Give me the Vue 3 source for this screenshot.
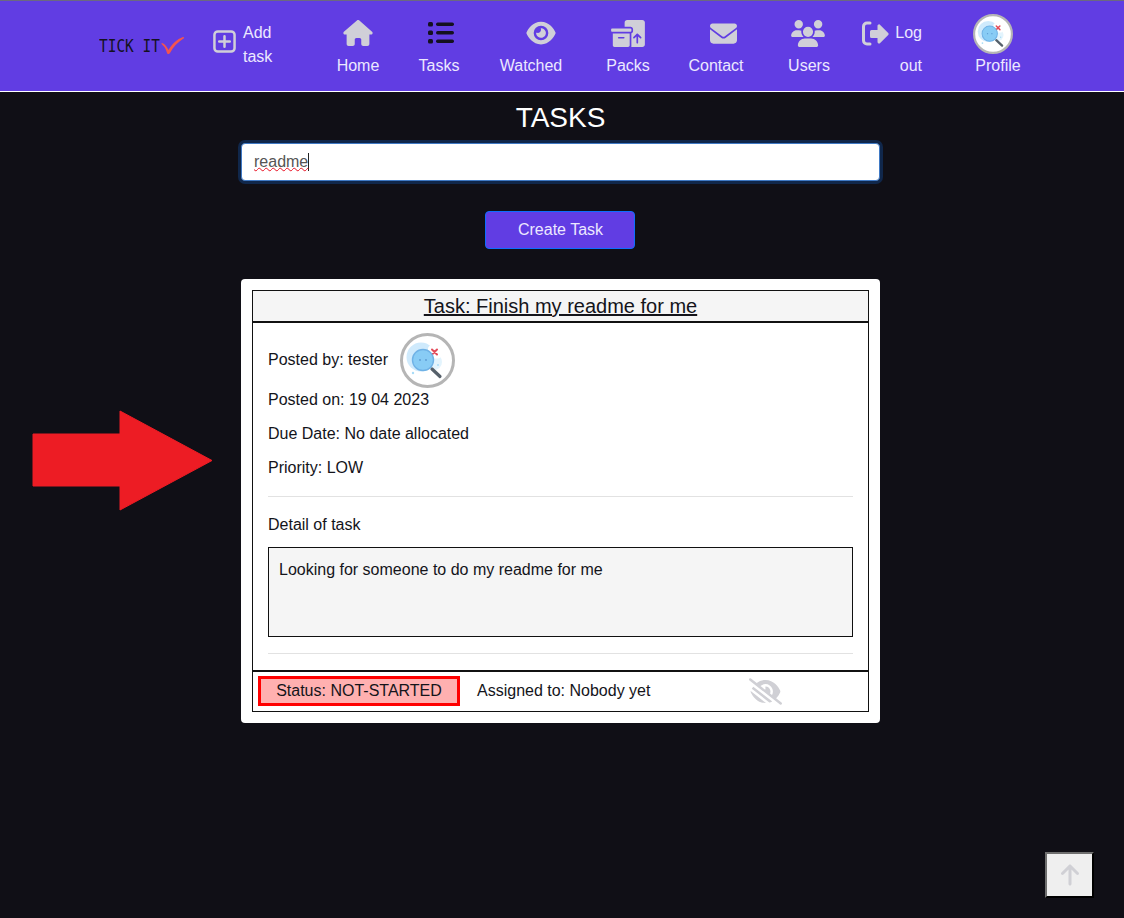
<template>
  <div class="page">
    <svg width="0" height="0" class="defs">
      <symbol id="avatar" viewBox="0 0 55 55">
        <circle cx="27.5" cy="27.5" r="26" fill="#fff" stroke="#b5b5b5" stroke-width="3" />
        <circle cx="21" cy="24" r="14.500" fill="#cfeafc" />
        <circle cx="34" cy="29" r="8" fill="#e3f4fd" />
        <circle cx="13" cy="40" r="1.200" fill="#a8dcf7" />
        <circle cx="38" cy="32" r="1" fill="#a8dcf7" />
        <rect x="28" y="12.500" width="13" height="13" rx="3.500" fill="#fff" />
        <path d="M32 16.500l5 5M37 16.500l-5 5" stroke="#e34b5a" stroke-width="2" stroke-linecap="round" />
        <path d="M32 36l8 7.500" stroke="#56606a" stroke-width="3.200" stroke-linecap="round" />
        <circle cx="23" cy="27" r="10.500" fill="#88ccf5" stroke="#6fb2e6" stroke-width="1.400" />
        <circle cx="20" cy="27" r=".9" fill="#5b9bd3" />
        <circle cx="26" cy="27" r=".9" fill="#5b9bd3" />
      </symbol>
    </svg>

    <nav class="navbar">
      <div class="brand">
        <span class="brand-text">TICK IT</span>
        <svg class="brand-check" viewBox="0 0 24 18">
          <path d="M1 7C4 8 6 11 7.500 14C11 8 16 3 22 1C23 .7 23.500 2 22.500 2.500C17 6 12 11 9 17C8 18.500 6.500 18.500 6 17C5 13 3 10 1 8.500C.3 8 .3 6.800 1 7Z" fill="#f4544f" />
        </svg>
      </div>

      <a class="add-task">
        <svg class="add-icon" viewBox="0 0 24 24">
          <rect x="1.500" y="1.500" width="21" height="21" rx="3.500" fill="none" stroke="#d0cfd8" stroke-width="2.600" />
          <path d="M12 6.500v11M6.500 12h11" stroke="#d0cfd8" stroke-width="2.600" stroke-linecap="round" />
        </svg>
        <span class="add-label">Add task</span>
      </a>

      <div class="links">
        <a class="link">
          <span class="link-icon">
            <svg width="30" height="26" viewBox="0 0 576 512"><path fill="#d0cfd8" d="M575.8 255.500c0 18-15 32.100-32 32.100h-32l.7 160.200c0 2.700-.2 5.400-.5 8.100V472c0 22.100-17.900 40-40 40H456c-1.100 0-2.200 0-3.300-.1c-1.400 .1-2.800 .1-4.200 .1H416 392c-22.100 0-40-17.900-40-40V448 384c0-17.700-14.300-32-32-32H256c-17.700 0-32 14.300-32 32v64 24c0 22.100-17.900 40-40 40H160 128.100c-1.500 0-3-.1-4.500-.2c-1.200 .1-2.400 .2-3.600 .2H104c-22.100 0-40-17.900-40-40V360c0-.9 0-1.900 .1-2.800V287.600H32c-18 0-32-14-32-32.100c0-9 3-17 10-24L266.400 8c7-7 15-8 22-8s15 2 21 7L564.800 231.500c8 7 12 15 11 24z" /></svg>
          </span>
          <span>Home</span>
        </a>
        <a class="link">
          <span class="link-icon">
            <svg class="icon-tasks" width="26" height="22" viewBox="0 0 26 22" fill="#14111f">
              <rect x="0" y="0" width="5" height="4.500" rx="1.500" />
              <rect x="0" y="8.500" width="5" height="4.500" rx="1.500" />
              <rect x="0" y="17" width="5" height="4.500" rx="1.500" />
              <rect x="8" y="0.500" width="18" height="3.400" rx="1.700" />
              <rect x="8" y="9" width="18" height="3.400" rx="1.700" />
              <rect x="8" y="17.500" width="18" height="3.400" rx="1.700" />
            </svg>
          </span>
          <span>Tasks</span>
        </a>
        <a class="link">
          <span class="link-icon">
            <svg class="icon-eye" width="30" height="26" viewBox="0 0 576 512"><path fill="#d0cfd8" d="M288 32c-80.800 0-145.500 36.800-192.600 80.600C48.600 156 17.300 208 2.500 243.700c-3.300 7.900-3.300 16.700 0 24.600C17.300 304 48.600 356 95.400 399.400C142.500 443.200 207.200 480 288 480s145.500-36.800 192.600-80.600c46.800-43.500 78.100-95.400 93-131.100c3.300-7.900 3.300-16.700 0-24.600c-14.900-35.700-46.200-87.700-93-131.100C433.500 68.800 368.800 32 288 32zM144 256a144 144 0 1 1 288 0 144 144 0 1 1 -288 0zm144-64c0 35.300-28.700 64-64 64c-7.100 0-13.900-1.200-20.300-3.300c-5.500-1.800-11.900 1.600-11.700 7.400c.3 6.900 1.300 13.800 3.200 20.700c13.700 51.200 66.400 81.600 117.600 67.900s81.600-66.400 67.900-117.600c-11.100-41.500-47.800-69.400-88.600-71.100c-5.800-.2-9.200 6.100-7.400 11.700c2.100 6.400 3.300 13.200 3.300 20.300z" /></svg>
          </span>
          <span>Watched</span>
        </a>
        <a class="link">
          <span class="link-icon">
            <svg width="34" height="27" viewBox="0 0 640 512"><path fill="#d0cfd8" d="M256 48c0-26.500 21.500-48 48-48H592c26.500 0 48 21.500 48 48V464c0 26.500-21.500 48-48 48H381.300c1.800-5 2.700-10.400 2.700-16V253.300c18.600-6.600 32-24.400 32-45.300V176c0-26.500-21.500-48-48-48H256V48zM571.300 347.300c6.200-6.200 6.200-16.400 0-22.600l-64-64c-6.200-6.200-16.400-6.200-22.600 0l-64 64c-6.200 6.200-6.200 16.400 0 22.600s16.400 6.200 22.600 0L480 310.600V432c0 8.800 7.200 16 16 16s16-7.200 16-16V310.600l36.700 36.700c6.200 6.200 16.400 6.200 22.600 0zM0 176c0-8.800 7.200-16 16-16H368c8.800 0 16 7.200 16 16v32c0 8.800-7.200 16-16 16H16c-8.800 0-16-7.200-16-16V176zm352 80V480c0 17.700-14.300 32-32 32H64c-17.700 0-32-14.300-32-32V256H352zM144 320c-8.800 0-16 7.200-16 16s7.200 16 16 16h96c8.800 0 16-7.200 16-16s-7.200-16-16-16H144z" /></svg>
          </span>
          <span>Packs</span>
        </a>
        <a class="link">
          <span class="link-icon">
            <svg class="icon-mail" width="27" height="27" viewBox="0 0 512 512"><path fill="#d0cfd8" d="M48 64C21.500 64 0 85.500 0 112c0 15.100 7.100 29.300 19.200 38.400L236.800 313.600c11.400 8.500 27 8.500 38.400 0L492.800 150.400c12.100-9.100 19.200-23.300 19.200-38.400c0-26.500-21.500-48-48-48H48zM0 176V384c0 35.300 28.700 64 64 64H448c35.300 0 64-28.700 64-64V176L294.400 339.200c-22.800 17.100-54 17.100-76.800 0L0 176z" /></svg>
          </span>
          <span>Contact</span>
        </a>
        <a class="link">
          <span class="link-icon">
            <svg class="icon-users" width="34" height="27" viewBox="0 0 640 512"><path fill="#d0cfd8" d="M144 0a80 80 0 1 1 0 160A80 80 0 1 1 144 0zM512 0a80 80 0 1 1 0 160A80 80 0 1 1 512 0zM0 298.700C0 239.800 47.800 192 106.700 192h42.700c15.900 0 31 3.500 44.600 9.700c-1.300 7.200-1.900 14.700-1.900 22.300c0 38.200 16.800 72.500 43.300 96c-.2 0-.4 0-.7 0H21.300C9.600 320 0 310.400 0 298.700zM405.300 320c-.2 0-.4 0-.7 0c26.600-23.500 43.300-57.800 43.300-96c0-7.600-.7-15-1.900-22.300c13.600-6.300 28.700-9.700 44.600-9.700h42.700C592.200 192 640 239.800 640 298.700c0 11.800-9.600 21.300-21.300 21.300H405.300zM224 224a96 96 0 1 1 192 0 96 96 0 1 1 -192 0zM128 485.300C128 411.700 187.700 352 261.300 352H378.700C452.300 352 512 411.700 512 485.300c0 14.700-11.900 26.700-26.700 26.700H154.700c-14.700 0-26.700-11.900-26.700-26.700z" /></svg>
          </span>
          <span>Users</span>
        </a>
        <a class="logout">
          <svg class="logout-icon" viewBox="0 0 27 25">
            <path d="M8 2H5A3.500 3.500 0 0 0 1.500 5.500v14A3.500 3.500 0 0 0 5 23h3" fill="none" stroke="#d0cfd8" stroke-width="3" stroke-linecap="round" />
            <path fill="#d0cfd8" d="M16.500 3.500a1.500 1.500 0 0 1 1.700.4l8 8a1.500 1.500 0 0 1 0 2l-8 8a1.500 1.500 0 0 1-2.700-1V17H9.500A1.500 1.500 0 0 1 8 15.500v-5A1.500 1.500 0 0 1 9.500 9h6V5a1.500 1.500 0 0 1 1-1.500z" />
          </svg>
          <span class="logout-label">Log out</span>
        </a>
        <a class="link profile">
          <svg class="nav-avatar"><use href="#avatar" /></svg>
          <span>Profile</span>
        </a>
      </div>
    </nav>

    <main class="content">
      <h1 class="title">TASKS</h1>
      <div class="search">
        <span class="search-text">readme</span>
      </div>
      <button class="create-btn">Create Task</button>

      <article class="card">
        <div class="task">
          <h2 class="task-header">Task: Finish my readme for me</h2>
          <div class="task-body">
            <div class="posted">
              <span class="posted-by">Posted by: tester</span>
              <svg class="task-avatar"><use href="#avatar" /></svg>
            </div>
            <p>Posted on: 19 04 2023</p>
            <p>Due Date: No date allocated</p>
            <p>Priority: LOW</p>
            <hr />
            <p class="detail-label">Detail of task</p>
            <div class="detail">Looking for someone to do my readme for me</div>
            <hr />
          </div>
          <div class="task-footer">
            <span class="status">Status: NOT-STARTED</span>
            <span class="assigned">Assigned to: Nobody yet</span>
            <svg class="watch-icon" viewBox="0 0 640 512"><path fill="#d0d0d5" d="M38.800 5.100C28.400-3.100 13.300-1.200 5.100 9.200S-1.200 34.700 9.200 42.900l592 464c10.400 8.200 25.500 6.300 33.700-4.100s6.300-25.500-4.100-33.700L525.600 386.700c39.600-40.600 66.400-86.100 79.900-118.400c3.300-7.900 3.300-16.700 0-24.600c-14.900-35.700-46.200-87.700-93-131.100C465.500 68.800 400.800 32 320 32c-68.200 0-125 26.300-169.300 60.800L38.800 5.100zM223 149.500c48.600-44.300 123-50.800 179.300-11.700c60.800 42.400 78.900 123.200 44.200 186.900L408 294.500c8.400-19.300 10.700-41.400 4.800-63.300c-11.100-41.500-47.800-69.400-88.600-71.100c-5.800-.2-9.200 6.100-7.400 11.700c2.100 6.400 3.300 13.200 3.300 20.300c0 10.200-2.400 19.800-6.600 28.300L223 149.500zm223.100 298L83.100 161.500c-11 14.400-20.500 28.700-28.400 42.200l339 265.700c18.700-5.500 36.200-13 52.600-21.800zM34.500 268.300c14.900 35.700 46.200 87.700 93 131.100C174.500 443.200 239.200 480 320 480c3.100 0 6.100-.1 9.200-.2L33.100 247.800c-1.800 6.800-1.300 14 1.400 20.500z" /></svg>
          </div>
        </div>
      </article>
    </main>

    <!-- annotation arrow laid over the screenshot -->
    <svg class="red-arrow" viewBox="0 0 182 101">
      <path d="M2 24H89V1L181 50.500L89 100V76H2Z" fill="#ed1c24" stroke="#ed1c24" stroke-width="1" stroke-linejoin="round" />
    </svg>

    <button class="to-top">
      <svg width="20" height="24" viewBox="0 0 384 512"><path fill="#d0d0d5" d="M214.600 41.400c-12.500-12.500-32.800-12.500-45.300 0l-160 160c-12.500 12.500-12.500 32.800 0 45.300s32.800 12.500 45.300 0L160 141.200V448c0 17.700 14.300 32 32 32s32-14.300 32-32V141.200L329.400 246.600c12.500 12.500 32.800 12.500 45.300 0s12.500-32.800 0-45.300l-160-160z" /></svg>
    </button>
  </div>
</template>

<script setup>
</script>

<style>
html,
body {
  background: #100f16;
}
</style>

<style scoped>
.page {
  position: relative;
  width: 1124px;
  height: 918px;
  overflow: hidden;
  background: #100f16;
  font-family: "Liberation Sans", Arial, sans-serif;
  font-size: 16px;
  line-height: 24px;
  color: #14141a;
}

.defs {
  position: absolute;
}

/* navbar */
.navbar {
  display: flex;
  height: 92px;
  box-sizing: border-box;
  padding-left: 99px;
  background: #613de3;
  border-top: 1px solid #6b6880;
  border-bottom: 1px solid #fff;
  color: #ece8ff;
}

.brand {
  display: flex;
  align-items: flex-start;
  width: 114px;
  height: 60px;
  padding-top: 33px;
  box-sizing: border-box;
}

.brand-text {
  width: 62px;
  flex: none;
  font-family: "DejaVu Sans Mono", monospace;
  font-size: 17px;
  line-height: 24px;
  white-space: nowrap;
  color: #14111f;
  transform: scaleX(.85);
  transform-origin: left center;
}

.brand-check {
  width: 24px;
  height: 18px;
  margin-top: 2px;
}

.add-task {
  display: flex;
  width: 105px;
  padding-top: 20px;
  box-sizing: border-box;
}

.add-icon {
  width: 23px;
  height: 23px;
  margin-top: 9px;
  margin-right: 7px;
}

.add-label {
  width: 36px;
  height: 48px;
}

.links {
  display: grid;
  grid-template-columns: 80px 82px 102px 92px 84px 102px 64px 148px;
  justify-items: center;
  height: 90px;
}

.link {
  display: flex;
  flex-direction: column;
  align-items: center;
}

.link-icon {
  display: flex;
  align-items: center;
  justify-content: center;
  height: 30px;
  margin-top: 17px;
  margin-bottom: 6px;
}

.icon-tasks {
  margin-left: 3px;
}

.icon-eye {
  margin-left: 20px;
}

.icon-mail {
  margin-left: 16px;
}

.icon-users {
  margin-right: 2px;
}

.profile {
  padding-top: 13px;
}

.nav-avatar {
  width: 40px;
  height: 40px;
  margin-right: 10px;
}

.logout {
  display: flex;
  width: 60px;
  padding-top: 15px;
  line-height: 33px;
  box-sizing: border-box;
}

.logout-icon {
  width: 27px;
  height: 25px;
  margin-top: 5px;
  margin-right: 6px;
  flex: none;
}

.logout-label {
  width: 27px;
  text-align: right;
}

/* page content */
.content {
  display: flex;
  flex-direction: column;
  align-items: center;
  width: 1121px;
}

.title {
  margin: 9px 0 8px;
  font-size: 28px;
  font-weight: 400;
  line-height: 34px;
  color: #fff;
}

.search {
  display: flex;
  align-items: center;
  width: 639px;
  height: 38px;
  box-sizing: border-box;
  padding: 0 12px;
  background: #fff;
  border: 1px solid #3f79c4;
  border-radius: 4px;
  box-shadow: 0 0 0 3px #10274b;
  color: #555;
}

.search-text {
  height: 18px;
  line-height: 18px;
  border-right: 1px solid #222;
  text-decoration: underline wavy #e81123 1px;
  text-underline-offset: 0;
}

.create-btn {
  width: 150px;
  height: 38px;
  margin-top: 30px;
  margin-right: 1px;
  padding: 0 0 0 1px;
  background: #613de3;
  border: 1px solid #0d6efd;
  border-radius: 4px;
  font: inherit;
  color: #ece8ff;
}

.card {
  width: 639px;
  margin-top: 30px;
  padding: 11px;
  box-sizing: border-box;
  background: #fff;
  border-radius: 4px;
}

.task {
  border: 1px solid #111;
}

.task-header {
  margin: 0;
  height: 32px;
  box-sizing: border-box;
  background: #f5f5f5;
  border-bottom: 2px solid #111;
  font-size: 20px;
  font-weight: 400;
  line-height: 30px;
  text-align: center;
  text-decoration: underline;
}

.task-body {
  padding: 10px 15px 16px;
}

.posted {
  display: flex;
  align-items: center;
  gap: 12px;
}

.posted-by {
  margin-top: -2px;
}

.task-avatar {
  width: 55px;
  height: 55px;
}

.task-body p {
  margin: 0 0 10px;
}

.task-body hr {
  height: 1px;
  margin: 16px 0 16px;
  border: none;
  background: #e2e2e2;
}

.task-body .detail + hr {
  margin: 16px 0 0;
}

.detail {
  height: 90px;
  box-sizing: border-box;
  padding: 10px 10px;
  background: #f5f5f5;
  border: 1px solid #111;
}

.task-footer {
  display: flex;
  align-items: center;
  height: 41px;
  box-sizing: border-box;
  padding: 0 0 1px 5px;
  border-top: 2px solid #111;
}

.status {
  width: 202px;
  height: 30px;
  box-sizing: border-box;
  background: #ffb0b0;
  border: 3px solid #f00;
  line-height: 24px;
  text-align: center;
}

.assigned {
  margin-left: 17px;
}

.watch-icon {
  width: 33px;
  height: 27px;
  margin-left: 99px;
}

/* things lying over the page */
.red-arrow {
  position: absolute;
  left: 31px;
  top: 410px;
  width: 182px;
  height: 101px;
}

.to-top {
  position: absolute;
  left: 1045px;
  top: 852px;
  display: flex;
  align-items: center;
  justify-content: center;
  width: 49px;
  height: 46px;
  padding: 0;
  background: #efefef;
  border: 2px solid;
  border-color: #6f6f6f #000 #000 #6f6f6f;
}
</style>
